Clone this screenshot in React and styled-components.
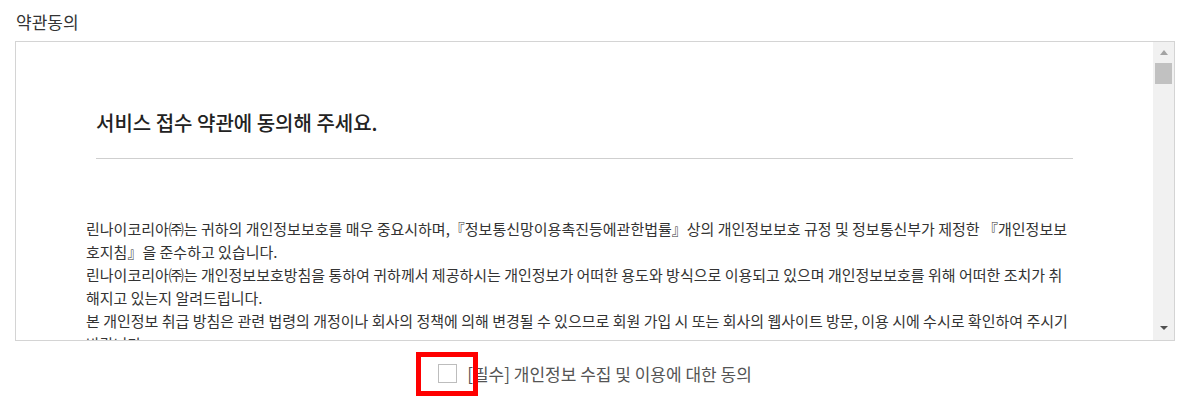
import React from "react";
import styled, { createGlobalStyle } from "styled-components";

const GlobalStyle = createGlobalStyle`
  body {
    margin: 0;
    background: #fff;
    font-family: "Noto Sans CJK KR", "Noto Sans", sans-serif;
    color: #333;
  }
`;

const Page = styled.div`
  padding: 9px 22px 26px 15px;
`;

const Label = styled.div`
  font-size: 17px;
  line-height: 26px;
  color: #333;
  padding-left: 1px;
  margin-bottom: 6px;
`;

const TermsBox = styled.div`
  display: flex;
  height: 298px;
  border: 1px solid #d4d4d4;
`;

const Viewport = styled.div`
  flex: 1;
  overflow: hidden;
`;

const ScrollTrack = styled.div`
  width: 21px;
  display: flex;
  flex-direction: column;
  background: #f1f1f1;
`;

const ArrowButton = styled.div`
  height: 21px;
  display: flex;
  align-items: center;
  justify-content: center;

  &::before {
    content: "";
    width: 0;
    height: 0;
    border-left: ${(p) => (p.$down ? 4 : 4.5)}px solid transparent;
    border-right: ${(p) => (p.$down ? 4 : 4.5)}px solid transparent;
    ${(p) =>
      p.$down
        ? "border-top: 4px solid #505050; margin-top: -4px;"
        : "border-bottom: 5px solid #a3a3a3; margin-top: -1px;"}
  }
`;

const Thumb = styled.div`
  height: 21px;
  margin: 0 2px;
  background: #c1c1c1;
`;

const TrackSpace = styled.div`
  flex: 1;
`;

const Content = styled.div`
  padding: 68px 70px 80px;
`;

const Title = styled.h2`
  margin: 0 10px;
  font-size: 20px;
  line-height: 26px;
  font-weight: 500;
  color: #222;
  padding-bottom: 22px;
  border-bottom: 1px solid #cfcfcf;
`;

const Body = styled.div`
  margin-top: 58px;
  font-size: 15px;
  line-height: 23px;
  color: #333;
`;

const Line = styled.div`
  white-space: nowrap;
`;

const Section = styled.div`
  margin-top: 23px;
`;

const SectionHead = styled.div`
  font-weight: 700;
  color: #222;
`;

const Para = styled.p`
  margin: 0;
`;

const AgreeRow = styled.div`
  display: flex;
  justify-content: center;
  padding-top: 23px;
`;

const AgreeLabel = styled.label`
  display: flex;
  align-items: flex-start;
  gap: 10px;
  font-size: 17px;
  line-height: 20px;
  color: #555;
  cursor: pointer;
`;

const CheckWrap = styled.span`
  position: relative;
  display: block;
  width: 19px;
  height: 19px;
`;

const Check = styled.input`
  appearance: none;
  display: block;
  margin: 0;
  width: 19px;
  height: 19px;
  border: 1px solid #bdbdbd;
  background: #fff;
`;

const Highlight = styled.span`
  position: absolute;
  left: -22px;
  top: -12px;
  width: 52px;
  height: 34px;
  border: 5px solid #ff0000;
  pointer-events: none;
`;

const sections = [
  {
    head: "1. 수집하는 개인정보의 항목",
    text: "회사는 서비스 접수, 상담, 고객 지원을 위해 아래와 같은 개인정보를 수집하고 있습니다. 수집항목 : 이름, 휴대전화번호, 전화번호, 주소, 이메일, 제품 모델명, 구입일자, 접수 내용.",
  },
  {
    head: "2. 개인정보의 수집 및 이용목적",
    text: "회사는 수집한 개인정보를 서비스 접수 및 처리, 방문 일정 안내, 처리 결과 통보, 고객 문의에 대한 응대, 불만 처리 등 민원 처리를 위해 활용합니다.",
  },
  {
    head: "3. 개인정보의 보유 및 이용기간",
    text: "원칙적으로 개인정보 수집 및 이용목적이 달성된 후에는 해당 정보를 지체 없이 파기합니다. 단, 관계법령의 규정에 의하여 보존할 필요가 있는 경우 관계법령에서 정한 기간 동안 보관합니다.",
  },
];

const App = () => {
  return (
    <Page>
      <GlobalStyle />
      <Label>약관동의</Label>
      <TermsBox>
        <Viewport>
          <Content>
            <Title>서비스 접수 약관에 동의해 주세요.</Title>
            <Body>
              <Line>
                린나이코리아㈜는 귀하의 개인정보보호를 매우 중요시하며,『정보통신망이용촉진등에관한법률』상의 개인정보보호 규정 및 정보통신부가 제정한 『개인정보보
              </Line>
              <Line>호지침』을 준수하고 있습니다.</Line>
              <Line>
                린나이코리아㈜는 개인정보보호방침을 통하여 귀하께서 제공하시는 개인정보가 어떠한 용도와 방식으로 이용되고 있으며 개인정보보호를 위해 어떠한 조치가 취
              </Line>
              <Line>해지고 있는지 알려드립니다.</Line>
              <Line>
                본 개인정보 취급 방침은 관련 법령의 개정이나 회사의 정책에 의해 변경될 수 있으므로 회원 가입 시 또는 회사의 웹사이트 방문, 이용 시에 수시로 확인하여 주시기
              </Line>
              <Line>바랍니다.</Line>
              {sections.map((s) => (
                <Section key={s.head}>
                  <SectionHead>{s.head}</SectionHead>
                  <Para>{s.text}</Para>
                </Section>
              ))}
            </Body>
          </Content>
        </Viewport>
        <ScrollTrack>
          <ArrowButton />
          <Thumb />
          <TrackSpace />
          <ArrowButton $down />
        </ScrollTrack>
      </TermsBox>
      <AgreeRow>
        <AgreeLabel>
          <CheckWrap>
            <Check type="checkbox" />
            <Highlight />
          </CheckWrap>
          [필수] 개인정보 수집 및 이용에 대한 동의
        </AgreeLabel>
      </AgreeRow>
    </Page>
  );
};

export default App;
